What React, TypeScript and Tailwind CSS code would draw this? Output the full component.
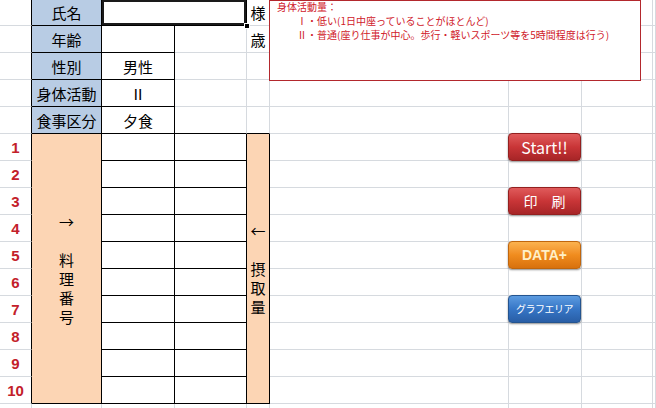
import React from "react";

const G = "border-r border-b border-[#d6dadf]";
const A = "border-r border-b border-r-black border-b-[#d6dadf]";
const K = "border-r border-b border-black bg-white";
const L = "bg-[#b8cce4] border-r border-b border-black";
const DG = "border-r border-b border-r-[#d6dadf] border-b-black";

function C({ className = "", children }: { className?: string; children?: React.ReactNode }) {
  return <div className={"flex items-center justify-center " + className}>{children}</div>;
}

function Btn({ kind, children }: { kind: "red" | "orange" | "blue"; children: React.ReactNode }) {
  const cls =
    kind === "red"
      ? "bg-linear-to-b from-[#e05a5b] via-[#c93537] to-[#a72527] border-[#93201f] text-white"
      : kind === "orange"
      ? "bg-linear-to-b from-[#fbb24e] via-[#f08c1e] to-[#d8710d] border-[#c0660d] text-[#fff0c8] font-bold"
      : "bg-linear-to-b from-[#5c9be0] via-[#3676c6] to-[#295ea6] border-[#24548f] text-white";
  return (
    <div
      className={
        "-ml-px -mt-px w-[73px] h-[28px] shrink-0 rounded-[4px] border flex items-center justify-center shadow-[0_1px_2px_rgba(0,0,0,0.45)] " +
        cls
      }
    >
      {children}
    </div>
  );
}

const nums = [1, 2, 3, 4, 5, 6, 7, 8, 9, 10];

export default function App() {
  return (
    <div className="relative w-[656px] h-[408px] overflow-hidden bg-white font-['Noto_Sans_CJK_JP','Noto_Sans_CJK_SC',sans-serif] text-black">
      <div className="grid grid-cols-[32px_70px_73px_72px_23px_239px_73px_71px_1fr] grid-rows-[26px_repeat(15,27px)] text-[15px] leading-none">
        {/* row 0 */}
        <C className={A} />
        <C className={L}>氏名</C>
        <div className="col-span-2 relative border-r border-b border-black bg-white">
          <div className="absolute inset-0 border-2 border-[#1a1a1a]" />
          <div className="absolute -right-[4px] -bottom-[4px] w-[6px] h-[6px] bg-black border border-white" />
        </div>
        <C className={G}>様</C>
        <C className={G} />
        <C className={G} />
        <C className={G} />
        <C className={G} />

        {/* row 1 */}
        <C className={A} />
        <C className={L}>年齢</C>
        <C className={K} />
        <C className={G} />
        <C className={G}>歳</C>
        <C className={G} />
        <C className={G} />
        <C className={G} />
        <C className={G} />

        {/* row 2 */}
        <C className={A} />
        <C className={L}>性別</C>
        <C className={K}>男性</C>
        <C className={G} />
        <C className={G} />
        <C className={G} />
        <C className={G} />
        <C className={G} />
        <C className={G} />

        {/* row 3 */}
        <C className={A} />
        <C className={L}>身体活動</C>
        <C className={K}>Ⅱ</C>
        <C className={G} />
        <C className={G} />
        <C className={G} />
        <C className={G} />
        <C className={G} />
        <C className={G} />

        {/* row 4 */}
        <C className={A} />
        <C className={L}>食事区分</C>
        <C className={K}>夕食</C>
        <C className={DG} />
        <C className={DG} />
        <C className={G} />
        <C className={G} />
        <C className={G} />
        <C className={G} />

        {/* rows 5-14 */}
        {nums.map((n) => (
          <React.Fragment key={n}>
            <C className={A + " font-['Liberation_Sans',Arial,sans-serif] font-bold text-[15px] text-[#c3202a]"}>{n}</C>
            {n === 1 && (
              <div className="row-span-10 flex flex-col items-center justify-center bg-[#fcd5b4] border-r border-b border-black text-[15px] leading-[19px]">
                <div>→</div>
                <div className="h-[19px]" />
                <div>料</div>
                <div>理</div>
                <div>番</div>
                <div>号</div>
              </div>
            )}
            <C className={K} />
            <C className={K} />
            {n === 1 && (
              <div className="row-span-10 flex flex-col items-center justify-center bg-[#fcd5b4] border-r border-b border-black text-[15px] leading-[19px]">
                <div>←</div>
                <div className="h-[19px]" />
                <div>摂</div>
                <div>取</div>
                <div>量</div>
              </div>
            )}
            <C className={G} />
            <div className={G + " flex items-start justify-start"}>
              {n === 1 && <Btn kind="red"><span className="text-[16px] font-normal">Start!!</span></Btn>}
              {n === 3 && <Btn kind="red"><span className="text-[14px]">印　刷</span></Btn>}
              {n === 5 && <Btn kind="orange"><span className="font-['Liberation_Sans',Arial,sans-serif] text-[14px]">DATA+</span></Btn>}
              {n === 7 && <Btn kind="blue"><span className="text-[10px] tracking-[-0.5px]">グラフエリア</span></Btn>}
            </div>
            <C className={G} />
            <C className={G} />
          </React.Fragment>
        ))}

        {/* row 15 */}
        <C className={G} />
        <C className={G} />
        <C className={G} />
        <C className={G} />
        <C className={G} />
        <C className={G} />
        <C className={G} />
        <C className={G} />
        <C className={G} />
      </div>

      {/* comment box */}
      <div className="absolute left-[269px] top-0 w-[372px] h-[81px] border border-[#b3282d] bg-white text-[10px] leading-[14px] text-[#d0202a]">
        <div className="-mt-px pl-[7px]">身体活動量：</div>
        <div className="pl-[27px]">Ⅰ・低い(1日中座っていることがほとんど)</div>
        <div className="pl-[27px]">Ⅱ・普通(座り仕事が中心。歩行・軽いスポーツ等を5時間程度は行う)</div>
      </div>
    </div>
  );
}
